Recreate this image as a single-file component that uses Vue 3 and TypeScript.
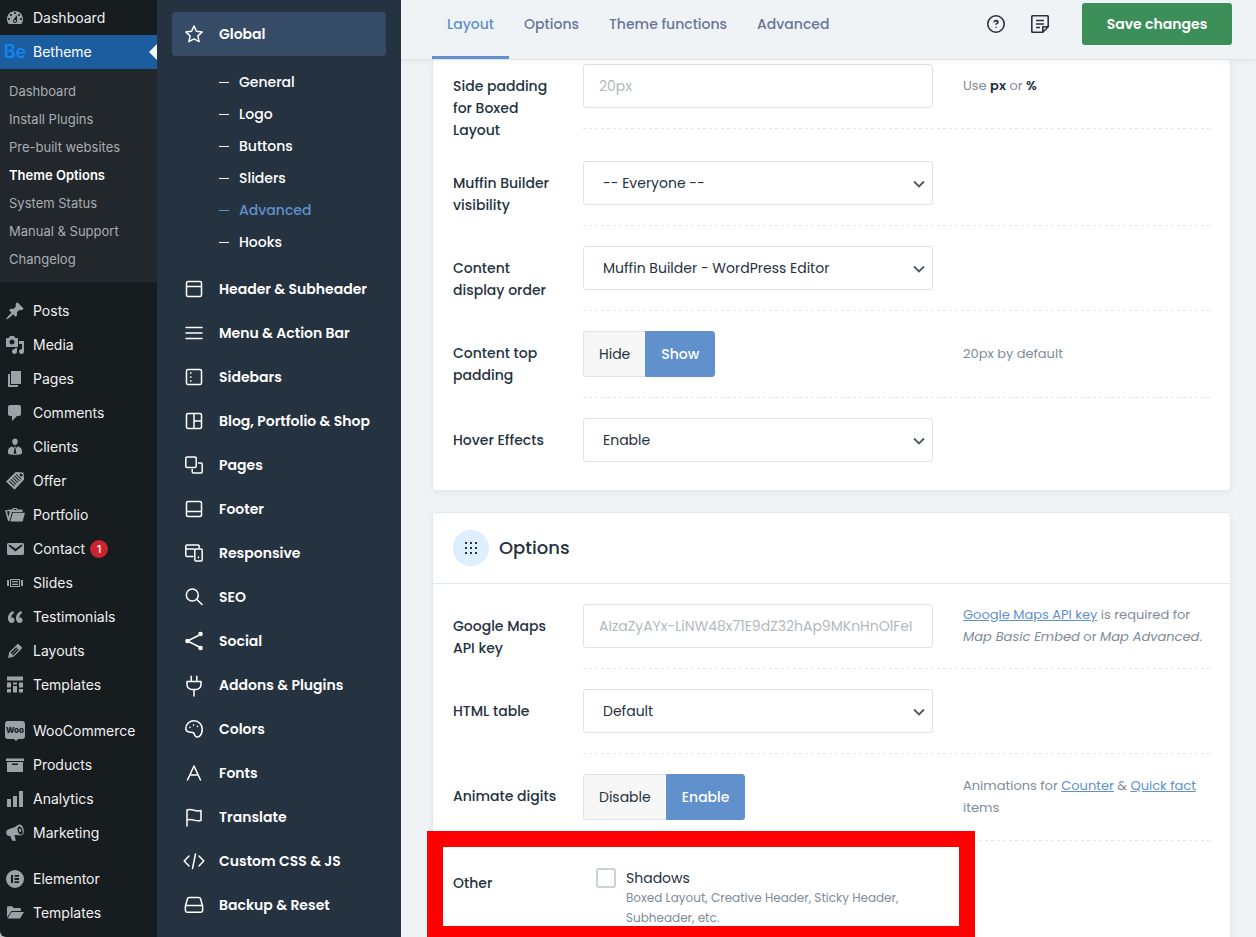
<script setup lang="ts">
import { ref } from 'vue'

interface AdminItem {
  label: string
  icon: string
  badge?: number
}

interface ThemeItem {
  label: string
  icon: string
}

const adminIcons: Record<string, string> = {
  dashboard:
    'M3.76 16h12.48c1.1-1.37 1.76-3.11 1.76-5 0-4.42-3.58-8-8-8s-8 3.58-8 8c0 1.89.66 3.63 1.76 5zM10 4c.55 0 1 .45 1 1s-.45 1-1 1-1-.45-1-1 .45-1 1-1zM6 6c.55 0 1 .45 1 1s-.45 1-1 1-1-.45-1-1 .45-1 1-1zm8 0c.55 0 1 .45 1 1s-.45 1-1 1-1-.45-1-1 .45-1 1-1zm-5.37 5.55L12 7v6c0 1.1-.9 2-2 2s-2-.9-2-2c0-.57.24-1.08.63-1.45zM4 10c.55 0 1 .45 1 1s-.45 1-1 1-1-.45-1-1 .45-1 1-1zm12 0c.55 0 1 .45 1 1s-.45 1-1 1-1-.45-1-1 .45-1 1-1zm-5 3c0-.55-.45-1-1-1s-1 .45-1 1 .45 1 1 1 1-.45 1-1z',
  pin: 'M10.44 3.02l1.82-1.82 6.36 6.35-1.83 1.82c-1.05-.68-2.48-.57-3.41.36l-.75.75c-.92.93-1.04 2.35-.35 3.41l-1.83 1.82-2.41-2.41-2.8 2.79c-.42.42-3.38 2.71-3.8 2.29s1.86-3.39 2.28-3.81l2.79-2.79L4.1 9.36l1.83-1.82c1.05.69 2.48.57 3.4-.36l.75-.75c.93-.92 1.05-2.35.36-3.41z',
  media:
    'M13 11V4c0-.55-.45-1-1-1h-1.67L9 1H5L3.67 3H2c-.55 0-1 .45-1 1v7c0 .55.45 1 1 1h10c.55 0 1-.45 1-1zM7 4.5c1.38 0 2.5 1.12 2.5 2.5S8.38 9.5 7 9.5 4.5 8.38 4.5 7 5.62 4.5 7 4.5zM14 6h5v10.5c0 1.38-1.12 2.5-2.5 2.5S14 17.88 14 16.5s1.12-2.5 2.5-2.5c.17 0 .34.02.5.05V9h-3V6zm-4 8.05V13h2v3.5c0 1.38-1.12 2.5-2.5 2.5S7 17.88 7 16.5 8.12 14 9.5 14c.17 0 .34.02.5.05z',
  pages: 'M6 15V2h10v13H6zM5 16h8v2H3V5h2v11z',
  comment:
    'M5 2h9c1.1 0 2 .9 2 2v7c0 1.1-.9 2-2 2h-2l-5 5v-5H5c-1.1 0-2-.9-2-2V4c0-1.1.9-2 2-2z',
  person:
    'M10 1.6c1.6 0 2.8 1.2 2.8 3C12.8 6.5 11.6 8.2 10 8.2S7.2 6.5 7.2 4.6c0-1.8 1.2-3 2.8-3zM7.6 9.5l1.8 2.2-.8 5h2.8l-.8-5 1.8-2.2c2.9.5 4.6 2 4.6 4.4V16c0 1-1.2 1.9-7 1.9S3 17 3 16v-2.1c0-2.4 1.7-3.9 4.6-4.4zM9.500 9.600h1l.4.8-.6 1h-.6l-.6-1z',
  ticket:
    'M1 10.6L10.7 1l7.8.6.6 7L9.6 18.8zM15 3.1a1.4 1.4 0 1 0 2.2 1.8A1.4 1.4 0 0 0 15 3.1zM4 10.4l5 5 .7-.7-5-5zM5.7 8.7l5 5 .7-.7-5-5zM7.4 7l5 5 .7-.7-5-5zM9.1 5.3l5 5 .7-.7-5-5zM10.8 3.6l5 5 .7-.7-5-5z',
  folders:
    'M4 4.5h3.2l.8-1.5h4l.6 1.5h5V7H7L4.5 16H3L0 5.5l3-.5zM9 4l-.3.9h2.8L11.2 4zM7.8 7.8H20L17.6 16.5H5.3zM2 6.3l1.4 5.6L4.7 7 4 6z',
  mail: 'M3.87 4h13.25C18.37 4 19 4.59 19 5.79v8.42c0 1.19-.63 1.79-1.88 1.79H3.87c-1.25 0-1.88-.6-1.88-1.79V5.79c0-1.2.63-1.79 1.88-1.79zm6.62 8.6l6.74-5.53c.24-.2.43-.66.13-1.07-.29-.41-.82-.42-1.17-.17l-5.7 3.86L4.8 5.83c-.35-.25-.88-.24-1.17.17-.3.41-.11.87.13 1.07z',
  slides:
    'M5 14V6h10v8H5zM2 13V7h2v6H2zM6 7v6h8V7H6zM16 7h2v6h-2V7zM13 9V8H7v1.3h6zM13 12v-1.3H7V12h6z',
  quote:
    'M9.49 13.22c0-.74-.2-1.38-.61-1.9-.62-.78-1.83-.88-2.53-.72-.29-1.65 1.11-3.75 2.92-4.65L7.88 4c-2.73 1.3-5.42 4.28-4.96 8.05C3.21 14.43 4.59 16 6.54 16c.85 0 1.56-.25 2.12-.75s.83-1.18.83-2.03zm8.05 0c0-.74-.2-1.38-.61-1.9-.63-.78-1.83-.88-2.53-.72-.29-1.65 1.11-3.75 2.92-4.65L15.93 4c-2.73 1.3-5.41 4.28-4.95 8.05.29 2.38 1.66 3.95 3.61 3.95.85 0 1.56-.25 2.12-.75s.83-1.18.83-2.03z',
  pencil:
    'M13.89 3.39l2.71 2.72c.46.46.42 1.24.03 1.64l-8.01 8.02-5.56 1.16 1.16-5.58s7.6-7.63 7.99-8.03c.39-.39 1.22-.39 1.68.07zm-2.73 2.79l-5.59 5.61 1.11 1.11 5.54-5.65zm-2.97 8.23l5.58-5.6-1.07-1.08-5.59 5.6z',
  grid: 'M2 1.5h16v4H2zM2 7.5h4v5H2zM8 7.5h4v2H8zM14 7.5h4v5h-4zM2 14h4v3.5H2zM8 11h4v6.5H8zM14 14h4v3.5h-4z',
  woo: 'M3 0h14a3 3 0 0 1 3 3v12a3 3 0 0 1-3 3h-4l-2 2-2-2H3a3 3 0 0 1-3-3V3a3 3 0 0 1 3-3z',
  box: 'M1 3.500h18V6H1zM2 7h16v10H2zM7 8.500v1.500h6V8.500z',
  bars: 'M2 10h4v8H2zM8 7h4v11H8zM14 2h4v16h-4z',
  megaphone:
    'M12.5 2.3C14.5.8 17 1.4 18.3 5.2c1.3 3.9.1 6.7-2.3 7.3-2 .3-4.5-1-6.6-.2l1.5 5.5H7.2l-2-5.1C3 13.4 1.600 12 1.300 10.200.9 8.400 1.500 7.300 3.200 6.500c3-1.300 7-2 9.300-4.200zM14 3.600c-1.600.7-1.800 2.900-1 5.100.8 2.100 2.400 3.400 3.700 2.700 1.200-.7 1.200-2.800.5-4.900-.7-2-1.900-3.500-3.200-2.900zM14.500 5.500c.7-.1 1.300.8 1.600 1.700.2.900.2 1.700-.5 1.900-.7.100-1.400-.6-1.600-1.600-.2-.900-.1-1.800.5-2z',
  elementor:
    'M10 1a9 9 0 1 0 0 18 9 9 0 0 0 0-18zM6 6h2v8H6zM9.500 6H14v1.800H9.500zM9.500 9.100H14v1.800H9.500zM9.500 12.200H14V14H9.500z',
  folder:
    'M2 14.500V4.500c0-.7.500-1.200 1.200-1.200H7L8.700 5h6c.7 0 1.200.5 1.200 1.200V8H7.500c-.8 0-1.400.3-1.800 1zM7.600 9H19l-3.300 5.600c-.4.600-.8.900-1.500.9H2.600L6 9.800c.4-.6.900-.8 1.600-.8z',
}

const adminGroups: AdminItem[][] = [
  [
    { label: 'Posts', icon: 'pin' },
    { label: 'Media', icon: 'media' },
    { label: 'Pages', icon: 'pages' },
    { label: 'Comments', icon: 'comment' },
    { label: 'Clients', icon: 'person' },
    { label: 'Offer', icon: 'ticket' },
    { label: 'Portfolio', icon: 'folders' },
    { label: 'Contact', icon: 'mail', badge: 1 },
    { label: 'Slides', icon: 'slides' },
    { label: 'Testimonials', icon: 'quote' },
    { label: 'Layouts', icon: 'pencil' },
    { label: 'Templates', icon: 'grid' },
  ],
  [
    { label: 'WooCommerce', icon: 'woo' },
    { label: 'Products', icon: 'box' },
    { label: 'Analytics', icon: 'bars' },
    { label: 'Marketing', icon: 'megaphone' },
  ],
  [
    { label: 'Elementor', icon: 'elementor' },
    { label: 'Templates', icon: 'folder' },
  ],
]

const bethemeLinks = [
  'Dashboard',
  'Install Plugins',
  'Pre-built websites',
  'Theme Options',
  'System Status',
  'Manual & Support',
  'Changelog',
]

const frame = 'M5 3.5h12a1.5 1.5 0 0 1 1.5 1.5v12a1.5 1.5 0 0 1-1.5 1.5H5A1.5 1.5 0 0 1 3.5 17V5A1.5 1.5 0 0 1 5 3.5z'

const themeIcons: Record<string, string> = {
  star: 'M11 3l2.4 5.3 5.8.7-4.3 3.9 1.2 5.7L11 15.8l-5.1 2.8 1.2-5.7L2.8 9l5.8-.7z',
  header: frame + 'M3.5 8.5h15',
  menu: 'M3 5.5h16M3 11h16M3 16.5h16',
  sidebar: frame + 'M7.500 7h.5M7.500 11h.5M7.500 15h.5',
  blog: frame + 'M11 3.5v15M11 11h7.5',
  copies: 'M4 3h8a1.2 1.2 0 0 1 1.2 1.2v8a1.2 1.2 0 0 1-1.2 1.2H4a1.2 1.2 0 0 1-1.2-1.2v-8A1.2 1.2 0 0 1 4 3zM15.5 9H18a1.2 1.2 0 0 1 1.2 1.2v7.6A1.2 1.2 0 0 1 18 19h-7.6a1.2 1.2 0 0 1-1.2-1.2V15.5',
  footer: frame + 'M3.5 13.5h15',
  responsive:
    'M10 14.5H4a1.2 1.2 0 0 1-1.2-1.2V4.2A1.2 1.2 0 0 1 4 3h11a1.2 1.2 0 0 1 1.2 1.2v1.3M2.8 7h8.2M13 7h5a1.2 1.2 0 0 1 1.2 1.2v9.6A1.2 1.2 0 0 1 18 19h-5a1.2 1.2 0 0 1-1.2-1.2V8.2A1.2 1.2 0 0 1 13 7zM15.500 15v.8',
  search: 'M9.3 3a6 6 0 1 1 0 12 6 6 0 0 1 0-12zM13.7 13.3L19 18.5',
  share: 'M17.5 4.5L4.5 11l13 6.5',
  plug: 'M4 7.5h14v3a5 5 0 0 1-5 5H9a5 5 0 0 1-5-5zM8.2 2.3v5M13.8 2.3v5M11 15.5V22',
  palette:
    'M11 2.8c4.8 0 8.2 3.5 8.2 8.4 0 3.2-1.2 5.7-2.6 7-1.200 1-2.900 1-4 .1-1.100-1-1.100-2.500-2.100-3.400-1.200-1-2.700-.4-4.700-.9C3.700 13.400 2.800 12.300 2.800 10.500c0-4.300 3.700-7.700 8.200-7.700zM7 9.200v.3M10.500 7v.3M14.500 8.300v.3',
  letter: 'M4.5 18L11 4l6.5 14M6.8 13h8.4',
  flag: 'M4 20V4c2.5-1.300 4.500-.6 7 .2s4.500 1 7 .3v10c-2.500.7-4.500.4-7-.4s-4.500-1.300-7 0',
  code: 'M6 6l-4.800 5L6 16M16 6l4.800 5L16 16M12.500 4l-3 14.500',
  drive: 'M6 3.5h10c.7 0 1.200.3 1.400 1l2.200 7.5v4.500a1.700 1.700 0 0 1-1.700 1.700H4.100a1.700 1.700 0 0 1-1.700-1.700V12l2.200-7.500c.2-.7.700-1 1.400-1zM2.600 11.500h16.800',
}

const themeSub = ['General', 'Logo', 'Buttons', 'Sliders', 'Advanced', 'Hooks']

const themeItems: ThemeItem[] = [
  { label: 'Header & Subheader', icon: 'header' },
  { label: 'Menu & Action Bar', icon: 'menu' },
  { label: 'Sidebars', icon: 'sidebar' },
  { label: 'Blog, Portfolio & Shop', icon: 'blog' },
  { label: 'Pages', icon: 'copies' },
  { label: 'Footer', icon: 'footer' },
  { label: 'Responsive', icon: 'responsive' },
  { label: 'SEO', icon: 'search' },
  { label: 'Social', icon: 'share' },
  { label: 'Addons & Plugins', icon: 'plug' },
  { label: 'Colors', icon: 'palette' },
  { label: 'Fonts', icon: 'letter' },
  { label: 'Translate', icon: 'flag' },
  { label: 'Custom CSS & JS', icon: 'code' },
  { label: 'Backup & Reset', icon: 'drive' },
]

const tabs = ['Layout', 'Options', 'Theme functions', 'Advanced']
const activeTab = ref('Layout')

const sidePadding = ref('')
const visibility = ref('-- Everyone --')
const displayOrder = ref('Muffin Builder - WordPress Editor')
const topPadding = ref('Show')
const hoverEffects = ref('Enable')
const mapsKey = ref('')
const htmlTable = ref('Default')
const animateDigits = ref('Enable')
const shadows = ref(false)
</script>

<template>
  <div class="page">
    <nav class="admin" aria-label="Admin menu">
      <a class="admin-item" href="#">
        <svg class="admin-icon" viewBox="0 0 20 20" aria-hidden="true"><path :d="adminIcons.dashboard" /></svg>
        <span>Dashboard</span>
      </a>
      <a class="admin-item current" href="#">
        <span class="be" aria-hidden="true">Be</span>
        <span>Betheme</span>
      </a>
      <div class="admin-sub">
        <a v-for="link in bethemeLinks" :key="link" href="#" :class="{ on: link === 'Theme Options' }">{{ link }}</a>
      </div>
      <div v-for="(group, g) in adminGroups" :key="g" class="admin-group">
        <a v-for="item in group" :key="item.label" class="admin-item" href="#">
          <svg class="admin-icon" viewBox="0 0 20 20" aria-hidden="true">
            <path :d="adminIcons[item.icon]" />
            <text v-if="item.icon === 'woo'" class="woo-text" x="10" y="12" text-anchor="middle">Woo</text>
          </svg>
          <span>{{ item.label }}</span>
          <span v-if="item.badge" class="badge">{{ item.badge }}</span>
        </a>
      </div>
    </nav>

    <nav class="theme" aria-label="Theme options">
      <a class="theme-item open" href="#">
        <svg class="theme-icon" viewBox="0 0 22 22" aria-hidden="true"><path :d="themeIcons.star" /></svg>
        <span>Global</span>
      </a>
      <div class="theme-sub">
        <a v-for="sub in themeSub" :key="sub" href="#" :class="{ on: sub === 'Advanced' }">{{ sub }}</a>
      </div>
      <a v-for="item in themeItems" :key="item.label" class="theme-item" href="#">
        <svg class="theme-icon" viewBox="0 0 22 22" aria-hidden="true">
          <path :d="themeIcons[item.icon]" />
          <g v-if="item.icon === 'share'" class="dots">
            <circle cx="17.5" cy="4" r="2.3" />
            <circle cx="4.5" cy="11" r="2.3" />
            <circle cx="17.5" cy="18" r="2.3" />
          </g>
        </svg>
        <span>{{ item.label }}</span>
      </a>
    </nav>

    <main class="main">
      <header class="topbar">
        <div class="tabs">
          <button
            v-for="tab in tabs"
            :key="tab"
            type="button"
            class="tab"
            :class="{ on: tab === activeTab }"
            @click="activeTab = tab"
          >
            {{ tab }}
          </button>
        </div>
        <div class="actions">
          <button type="button" class="tool" aria-label="Help">
            <svg viewBox="0 0 24 24" aria-hidden="true">
              <circle cx="12" cy="12" r="8.200" />
              <path d="M10.200 10.300c0-1 .8-1.700 1.800-1.700s1.900.6 1.900 1.600c0 1.300-1.900 1.300-1.900 2.600M12 14.800v.9" />
            </svg>
          </button>
          <button type="button" class="tool" aria-label="Notes">
            <svg viewBox="0 0 24 24" aria-hidden="true">
              <path d="M20.200 14.800V4.600a.8.800 0 0 0-.8-.8H4.600a.8.800 0 0 0-.8.800v14.800c0 .4.400.8.800.8h10.200zM14.800 20v-5.200H20M8 8.500h8M8 12h8M8 15.500h4" />
            </svg>
          </button>
          <button type="button" class="save">Save changes</button>
        </div>
      </header>

      <div class="content">
        <section class="card first">
          <div class="row">
            <label class="label" for="side-padding">Side padding for Boxed Layout</label>
            <div class="field">
              <div class="control"><input id="side-padding" v-model="sidePadding" class="box" type="text" placeholder="20px" /></div>
              <p class="hint">Use <b>px</b> or <b>%</b></p>
            </div>
          </div>
          <div class="row">
            <label class="label" for="visibility">Muffin Builder visibility</label>
            <div class="field">
              <div class="control">
                <select id="visibility" v-model="visibility" class="box"><option>-- Everyone --</option></select>
                <svg class="chevron" viewBox="0 0 12 12" aria-hidden="true"><path d="M1 3.500l5 5 5-5" /></svg>
              </div>
            </div>
          </div>
          <div class="row">
            <label class="label" for="display-order">Content display order</label>
            <div class="field">
              <div class="control">
                <select id="display-order" v-model="displayOrder" class="box"><option>Muffin Builder - WordPress Editor</option></select>
                <svg class="chevron" viewBox="0 0 12 12" aria-hidden="true"><path d="M1 3.500l5 5 5-5" /></svg>
              </div>
            </div>
          </div>
          <div class="row">
            <span id="top-padding" class="label">Content top padding</span>
            <div class="field">
              <div class="control switch" role="group" aria-labelledby="top-padding">
                <button
                  v-for="option in ['Hide', 'Show']"
                  :key="option"
                  type="button"
                  :class="{ on: option === topPadding }"
                  @click="topPadding = option"
                >
                  {{ option }}
                </button>
              </div>
              <p class="hint">20px by default</p>
            </div>
          </div>
          <div class="row">
            <label class="label" for="hover-effects">Hover Effects</label>
            <div class="field">
              <div class="control">
                <select id="hover-effects" v-model="hoverEffects" class="box"><option>Enable</option></select>
                <svg class="chevron" viewBox="0 0 12 12" aria-hidden="true"><path d="M1 3.500l5 5 5-5" /></svg>
              </div>
            </div>
          </div>
        </section>

        <section class="card">
          <div class="card-head">
            <span class="card-icon">
              <svg viewBox="0 0 14 14" aria-hidden="true">
                <path d="M1 1h2v2H1zM6 1h2v2H6zM11 1h2v2h-2zM1 6h2v2H1zM6 6h2v2H6zM11 6h2v2h-2zM1 11h2v2H1zM6 11h2v2H6zM11 11h2v2h-2z" />
              </svg>
            </span>
            <h2>Options</h2>
          </div>
          <div class="row">
            <label class="label" for="maps-key">Google Maps API key</label>
            <div class="field">
              <div class="control"><input id="maps-key" v-model="mapsKey" class="box" type="text" placeholder="AIzaZyAYx-LiNW48x71E9dZ32hAp9MKnHnOlFeI" /></div>
              <p class="hint long"><a href="#">Google Maps API key</a> is required for <i>Map Basic Embed</i> or <i>Map Advanced</i>.</p>
            </div>
          </div>
          <div class="row">
            <label class="label" for="html-table">HTML table</label>
            <div class="field">
              <div class="control">
                <select id="html-table" v-model="htmlTable" class="box"><option>Default</option></select>
                <svg class="chevron" viewBox="0 0 12 12" aria-hidden="true"><path d="M1 3.500l5 5 5-5" /></svg>
              </div>
            </div>
          </div>
          <div class="row">
            <span id="animate-digits" class="label">Animate digits</span>
            <div class="field">
              <div class="control switch" role="group" aria-labelledby="animate-digits">
                <button
                  v-for="option in ['Disable', 'Enable']"
                  :key="option"
                  type="button"
                  :class="{ on: option === animateDigits }"
                  @click="animateDigits = option"
                >
                  {{ option }}
                </button>
              </div>
              <p class="hint long">Animations for <a href="#">Counter</a> &amp; <a href="#">Quick fact</a> items</p>
            </div>
          </div>
          <div class="row">
            <span class="label">Other</span>
            <div class="field">
              <div class="control check">
                <input id="shadows" v-model="shadows" type="checkbox" />
                <label for="shadows">
                  <span class="check-title">Shadows</span>
                  <span class="check-text">Boxed Layout, Creative Header, Sticky Header, Subheader, etc.</span>
                </label>
              </div>
            </div>
            <div class="highlight" aria-hidden="true"></div>
          </div>
        </section>
      </div>
    </main>
  </div>
</template>

<style>
body {
  margin: 0;
  background: #b9bcc0;
}
</style>

<style scoped>
* {
  box-sizing: border-box;
}

.page {
  display: grid;
  grid-template-columns: 157px 244px minmax(0, 1fr);
  height: 100vh;
  overflow: hidden;
  font-family: Poppins, Inter, 'Liberation Sans', sans-serif;
  font-size: 14px;
  line-height: 22px;
  color: #25323f;
}

a {
  text-decoration: none;
}

button {
  font: inherit;
  color: inherit;
  cursor: pointer;
}

/* Admin menu */
.admin {
  background: #171c1f;
  border-bottom-left-radius: 6px;
  overflow: hidden;
  padding-top: 1px;
  font-family: Inter, 'Liberation Sans', sans-serif;
}

.admin-item {
  display: flex;
  align-items: center;
  gap: 8px;
  height: 34px;
  padding-left: 5px;
  color: #f0f0f1;
  position: relative;
}

.admin-icon {
  width: 20px;
  height: 20px;
  flex: none;
  fill: #9ca2a7;
  fill-rule: evenodd;
}

.woo-text {
  fill: #171c1f;
  font-size: 8px;
  font-weight: 800;
}

.current {
  background: #1c5da0;
  color: #fff;
}

.current::after {
  content: '';
  position: absolute;
  right: 0;
  top: 9px;
  border: 8px solid transparent;
  border-left-width: 0;
  border-right-color: #eff3f6;
}

.be {
  width: 20px;
  font-size: 18px;
  font-weight: 600;
  line-height: 20px;
  color: #1484ee;
  display: flex;
  justify-content: center;
}

.admin-sub {
  display: flex;
  flex-direction: column;
  padding: 8px 0 9px 9px;
  background: #22272b;
}

.admin-sub a {
  font-size: 13px;
  line-height: 28px;
  color: #a9aeb3;
}

.admin-sub .on {
  color: #fff;
  font-weight: 600;
}

.admin-group {
  margin-top: 12px;
}

.badge {
  display: flex;
  align-items: center;
  justify-content: center;
  width: 18px;
  height: 18px;
  margin-left: -3px;
  border-radius: 9px;
  background: #cb2431;
  color: #fff;
  font-size: 11px;
  font-weight: 500;
}

/* Theme options menu */
.theme {
  background: #25323f;
  padding: 12px 15px 0;
  overflow: hidden;
}

.theme-item {
  display: flex;
  align-items: center;
  gap: 14px;
  height: 44px;
  padding-left: 11px;
  border-radius: 4px;
  color: #fff;
  font-weight: 600;
  white-space: nowrap;
}

.open {
  background: #364b66;
}

.theme-icon {
  width: 22px;
  height: 22px;
  flex: none;
  fill: none;
  stroke: #fff;
  stroke-width: 1.5;
  stroke-linejoin: round;
  stroke-linecap: round;
  overflow: visible;
}

.dots {
  fill: #fff;
  stroke: none;
}

.theme-sub {
  display: flex;
  flex-direction: column;
  padding: 10px 0 9px 47px;
}

.theme-sub a {
  display: flex;
  align-items: center;
  gap: 10px;
  height: 32px;
  color: #fff;
  font-weight: 500;
}

.theme-sub a::before {
  content: '';
  width: 10px;
  height: 1px;
  background: currentColor;
}

.theme-sub .on {
  color: #6091cd;
}

/* Main column */
.main {
  background: #eff3f6;
  overflow: hidden;
}

.topbar {
  position: relative;
  z-index: 1;
  display: flex;
  justify-content: space-between;
  height: 60px;
  padding: 0 24px 0 31px;
  background: #eff3f6;
  border-bottom: 1px solid #dfe4eb;
  box-shadow: 0 2px 6px rgba(37, 50, 63, 0.05);
}

.tabs {
  display: flex;
}

.tab {
  padding: 0 15px 8px;
  background: none;
  border: 0;
  border-bottom: 3px solid transparent;
  color: #69759a;
  font-weight: 500;
  white-space: nowrap;
}

.tab.on {
  color: #6091cd;
  border-bottom-color: #6091cd;
}

.actions {
  display: flex;
  align-items: flex-start;
  padding-top: 3px;
}

.tool {
  display: flex;
  align-items: center;
  justify-content: center;
  width: 44px;
  height: 42px;
  padding: 0;
  border: 0;
  background: none;
}

.tool svg {
  width: 24px;
  height: 24px;
  fill: none;
  stroke: #25323f;
  stroke-width: 1.6;
  stroke-linejoin: round;
}

.save {
  width: 150px;
  height: 42px;
  margin-left: 20px;
  padding: 0;
  border: 0;
  border-radius: 3px;
  background: #3d8f5a;
  color: #fff;
  font-weight: 600;
}

.content {
  display: flex;
  flex-direction: column;
  gap: 21px;
  padding: 0 25px 0 31px;
}

.card {
  background: #fff;
  border: 1px solid #e3e7f1;
  border-radius: 3px;
  box-shadow: 0 2px 5px rgba(37, 50, 63, 0.05);
  padding-bottom: 30px;
}

.first {
  border-top: 0;
  padding-top: 4px;
  padding-bottom: 28px;
}

.card-head {
  display: flex;
  align-items: center;
  gap: 10px;
  height: 71px;
  padding: 0 20px;
  border-bottom: 1px solid #e3e7f1;
}

.card-icon {
  display: flex;
  align-items: center;
  justify-content: center;
  width: 36px;
  height: 36px;
  border-radius: 50%;
  background: #dceeff;
}

.card-icon svg {
  width: 14px;
  height: 14px;
  fill: #25323f;
}

h2 {
  margin: 0;
  font-size: 18px;
  line-height: 26px;
  font-weight: 500;
}

.row {
  position: relative;
  display: grid;
  grid-template-columns: 130px minmax(0, 1fr);
  align-items: start;
  padding: 20px 20px 0;
}

.first .row:first-child {
  padding-top: 0;
}

.label {
  padding: 11px 20px 0 0;
  font-weight: 500;
}

.field {
  display: grid;
  grid-template-columns: minmax(0, 350px) minmax(0, 247px);
  column-gap: 30px;
  justify-content: space-between;
  align-items: start;
  padding-bottom: 21px;
  background: linear-gradient(90deg, #e5e9ef 50%, transparent 50%) left bottom / 6px 1px repeat-x;
}

.row:last-child .field {
  padding-bottom: 0;
  background: none;
}

.control {
  position: relative;
}

.box {
  display: block;
  width: 100%;
  height: 44px;
  margin: 0;
  padding: 0 15px;
  border: 1px solid #dde3eb;
  border-radius: 3px;
  background: #fff;
  color: #25323f;
  font: inherit;
}

.box::placeholder {
  color: #b4b9be;
  opacity: 1;
}

select.box {
  appearance: none;
  padding: 0 40px 0 19px;
}

.chevron {
  position: absolute;
  right: 8px;
  top: 17px;
  width: 12px;
  height: 12px;
  fill: none;
  stroke: #50575e;
  stroke-width: 1.8;
  pointer-events: none;
}

.switch {
  display: flex;
}

.switch button {
  height: 46px;
  padding: 0 15px;
  border: 1px solid #dde3eb;
  border-right: 0;
  border-radius: 3px 0 0 3px;
  background: #f7f7f7;
}

.switch button:last-child {
  border-right: 1px solid #dde3eb;
  border-radius: 0 3px 3px 0;
}

.switch .on,
.switch .on:last-child {
  background: #6091cd;
  border-color: #6091cd;
  color: #fff;
  font-weight: 500;
}

.hint {
  margin: 0;
  padding-top: 11px;
  font-size: 13px;
  color: #7f8b99;
}

.hint.long {
  padding-top: 0;
}

.switch + .hint {
  padding-top: 12px;
}

.switch + .long {
  padding-top: 1px;
}

.hint b {
  color: #25323f;
  font-weight: 600;
}

.hint a {
  color: #6091cd;
  text-decoration: underline;
}

.check {
  display: flex;
  gap: 10px;
  padding: 7px 20px 0 13px;
}

.check input {
  appearance: none;
  flex: none;
  width: 20px;
  height: 20px;
  margin: 0;
  border: 2px solid #c9d3de;
  border-radius: 3px;
  background: #fff;
}

.check input:checked {
  background: #6091cd;
  border-color: #6091cd;
}

.check label {
  display: flex;
  flex-direction: column;
  line-height: 20px;
}

.check-text {
  font-size: 12px;
  color: #7f8b99;
}

.highlight {
  position: absolute;
  left: -6px;
  top: -10px;
  width: 548px;
  height: 111px;
  border: 16px solid #fe0000;
  pointer-events: none;
}
</style>
